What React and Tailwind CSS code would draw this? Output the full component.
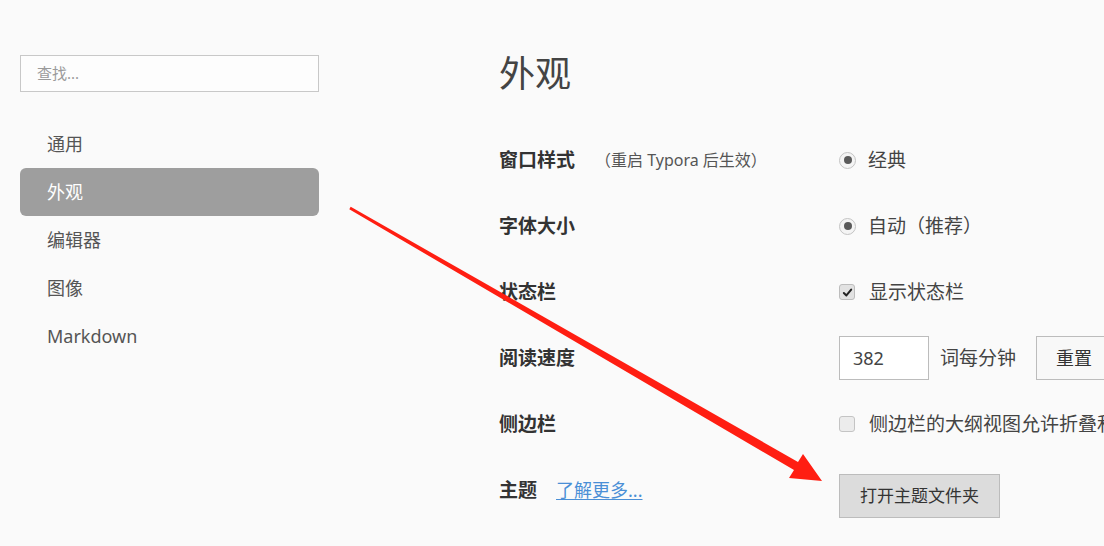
import React from "react";

const navItems = ["通用", "外观", "编辑器", "图像", "Markdown"];

const Radio = () => (
  <span className="w-[17px] h-[17px] rounded-full border border-[#c4c4c4] bg-[#f4f4f4] flex items-center justify-center shrink-0">
    <span className="w-[8px] h-[8px] rounded-full bg-[#5a5a5a]"></span>
  </span>
);

const Checkbox = ({ checked }) => (
  <span
    className={
      checked
        ? "w-[16px] h-[16px] rounded-[3px] border border-[#bdbdbd] bg-[#e2e2e2] flex items-center justify-center shrink-0"
        : "w-[16px] h-[16px] rounded-[3px] border border-[#c4c4c4] bg-[#ececec] shrink-0"
    }
  >
    {checked && (
      <svg width="11" height="11" viewBox="0 0 12 12" fill="none">
        <path d="M2 6.5L4.8 9.2L10 2.8" stroke="#222" strokeWidth="2.2" strokeLinecap="round" strokeLinejoin="round" />
      </svg>
    )}
  </span>
);

const Row = ({ label, extra, children }) => (
  <div className="grid grid-cols-[340px_1fr] h-[66px] items-center">
    <div className="flex items-center whitespace-nowrap">
      <span className="text-[19px] font-bold text-[#333]">{label}</span>
      {extra}
    </div>
    <div className="flex items-center whitespace-nowrap">{children}</div>
  </div>
);

export default function App() {
  return (
    <div
      className="relative w-[1104px] h-[546px] overflow-hidden bg-[#fafafa] flex"
      style={{ fontFamily: '"Noto Sans", "Noto Sans CJK SC", sans-serif' }}
    >
      {/* sidebar */}
      <div className="w-[319px] pl-[20px] pt-[55px] shrink-0">
        <div className="h-[37px] w-[299px] border border-[#c8c8c8] bg-[#fdfdfd] flex items-center pl-[16px] text-[15px] text-[#9a9a9a]">
          查找...
        </div>
        <div className="mt-[28px] flex flex-col">
          {navItems.map((item) =>
            item === "外观" ? (
              <div
                key={item}
                className="h-[48px] w-[299px] rounded-[6px] bg-[#9e9e9e] flex items-center pl-[27px] text-[18px] text-white"
              >
                {item}
              </div>
            ) : (
              <div key={item} className="h-[48px] w-[299px] flex items-center pl-[27px] text-[18px] text-[#555]">
                {item}
              </div>
            )
          )}
        </div>
      </div>

      {/* main */}
      <div className="ml-[180px] pt-[50px] flex-1">
        <h1 className="text-[36px] leading-[48px] text-[#444] font-normal">外观</h1>
        <div className="mt-[29px] flex flex-col">
          <Row
            label="窗口样式"
            extra={<span className="ml-[20px] text-[16px] text-[#555]">（重启 Typora 后生效）</span>}
          >
            <Radio />
            <span className="ml-[12px] text-[19px] text-[#444]">经典</span>
          </Row>
          <Row label="字体大小">
            <Radio />
            <span className="ml-[12px] text-[19px] text-[#444]">自动（推荐）</span>
          </Row>
          <Row label="状态栏">
            <Checkbox checked />
            <span className="ml-[14px] text-[19px] text-[#444]">显示状态栏</span>
          </Row>
          <Row label="阅读速度">
            <div className="w-[90px] h-[44px] border border-[#bcbcbc] bg-white flex items-center pl-[13px] text-[18px] text-[#444]">
              382
            </div>
            <span className="ml-[11px] text-[19px] text-[#444]">词每分钟</span>
            <div className="ml-[20px] w-[100px] h-[44px] border border-[#bcbcbc] bg-[#f8f8f8] flex items-center pl-[19px] text-[18px] text-[#333]">
              重置
            </div>
          </Row>
          <Row label="侧边栏">
            <Checkbox />
            <span className="ml-[14px] text-[19px] text-[#444]">侧边栏的大纲视图允许折叠和展开</span>
          </Row>
          <Row
            label="主题"
            extra={<a className="ml-[19px] text-[18px] text-[#4a8fd6] underline underline-offset-2">了解更多...</a>}
          >
            <div className="mt-[12px] w-[161px] h-[44px] border border-[#bcbcbc] bg-[#dcdcdc] flex items-center justify-center text-[17px] text-[#333]">
              打开主题文件夹
            </div>
          </Row>
        </div>
      </div>

      {/* annotation arrow */}
      <svg className="absolute inset-0 pointer-events-none" width="1104" height="546" viewBox="0 0 1104 546">
        <polygon
          points="350.7,206.7 798,462 803,454 822,481 789,478 794,470 349.3,209.3"
          fill="#ff1e12"
        />
      </svg>
    </div>
  );
}
